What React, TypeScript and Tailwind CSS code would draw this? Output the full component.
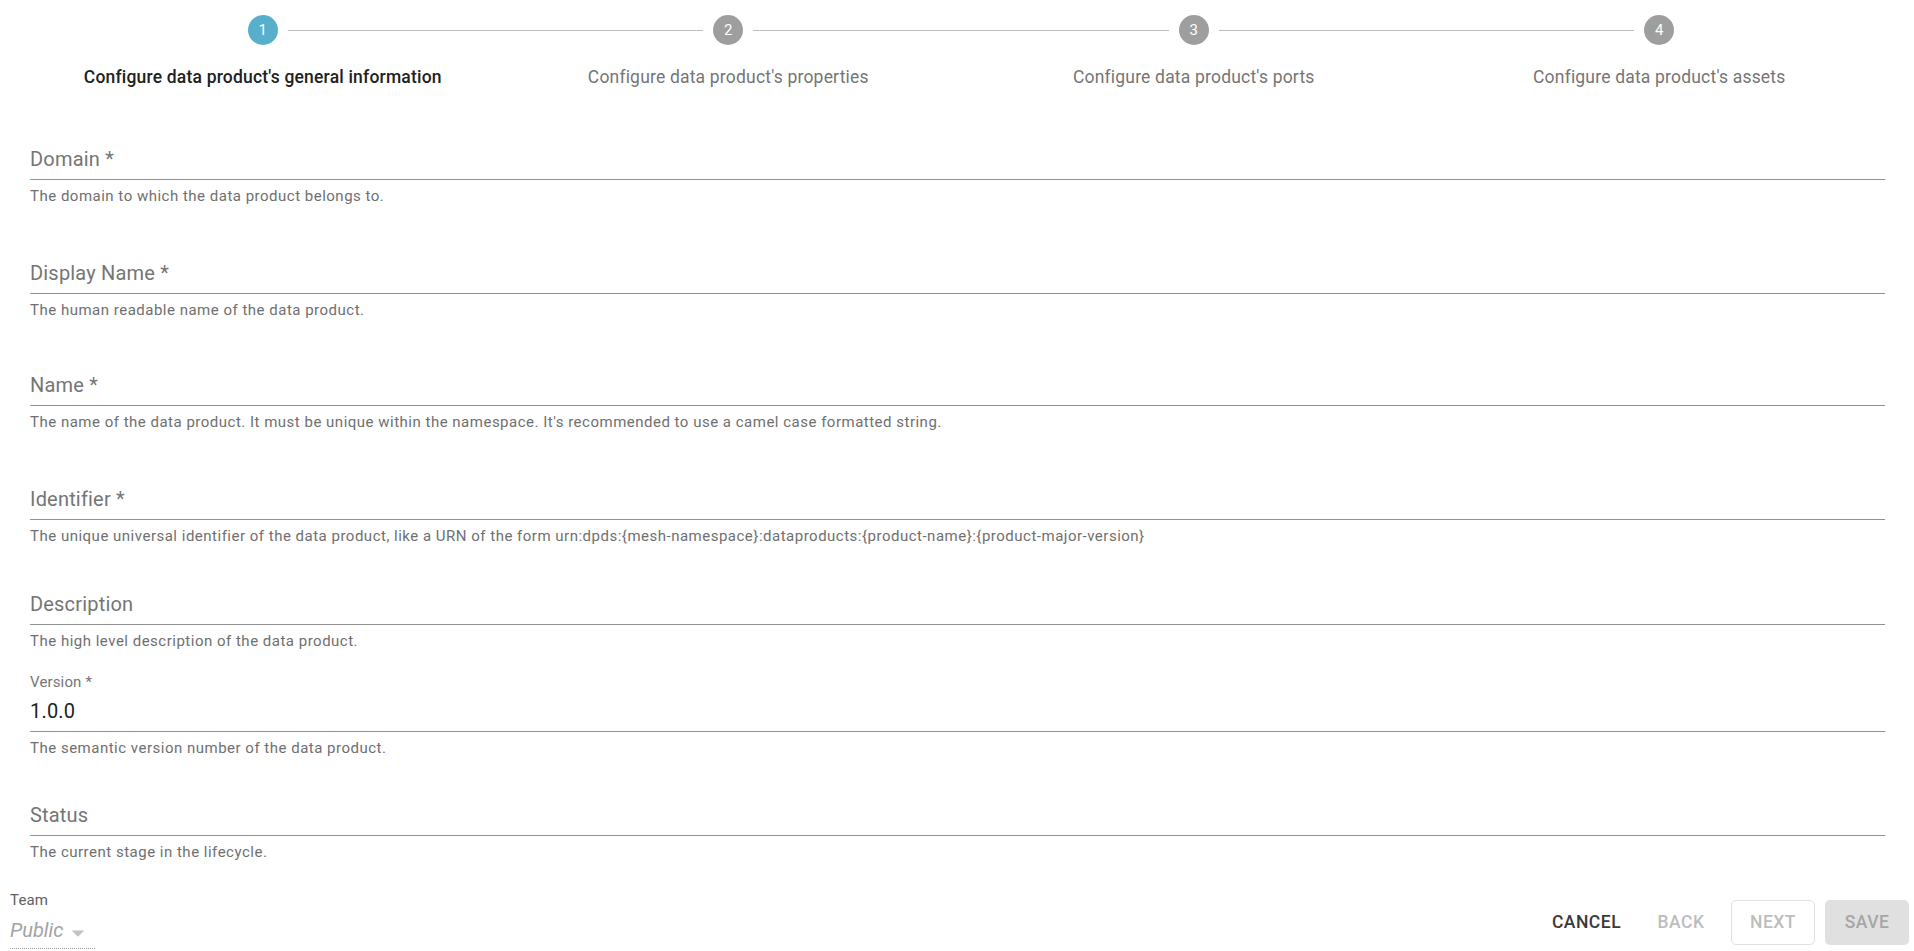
import React from 'react';

const steps = [
  "Configure data product's general information",
  "Configure data product's properties",
  "Configure data product's ports",
  "Configure data product's assets",
];

type FieldDef = { label: string; helper: string; mt: string; value?: string };

const fields: FieldDef[] = [
  { label: 'Domain *', helper: 'The domain to which the data product belongs to.', mt: 'mt-0' },
  { label: 'Display Name *', helper: 'The human readable name of the data product.', mt: 'mt-[29px]' },
  {
    label: 'Name *',
    helper:
      "The name of the data product. It must be unique within the namespace. It's recommended to use a camel case formatted string.",
    mt: 'mt-[27px]',
  },
  {
    label: 'Identifier *',
    helper:
      'The unique universal identifier of the data product, like a URN of the form urn:dpds:{mesh-namespace}:dataproducts:{product-name}:{product-major-version}',
    mt: 'mt-[29px]',
  },
  { label: 'Description', helper: 'The high level description of the data product.', mt: 'mt-[20px]' },
  { label: 'Version *', helper: 'The semantic version number of the data product.', mt: 'mt-[22px]', value: '1.0.0' },
  { label: 'Status', helper: 'The current stage in the lifecycle.', mt: 'mt-[19px]' },
];

function Stepper() {
  return (
    <div className="flex pt-[15px] pl-[30px] pr-[22px]">
      {steps.map((s, i) => {
        const active = i === 0;
        return (
          <div key={s} className="flex-1 flex flex-col items-center">
            <div className="flex items-center w-full">
              <div className={i === 0 ? 'flex-1 mr-[10px]' : 'flex-1 mr-[10px] h-px bg-[#bdbdbd]'} />
              <div
                className={
                  'w-[30px] h-[30px] rounded-full flex items-center justify-center text-white text-[15px] leading-none ' +
                  (active ? 'bg-[#58afcb]' : 'bg-[#9e9e9e]')
                }
              >
                {i + 1}
              </div>
              <div className={i === steps.length - 1 ? 'flex-1 ml-[10px]' : 'flex-1 ml-[10px] h-px bg-[#bdbdbd]'} />
            </div>
            <div
              className={
                'mt-[20px] text-[17.5px] leading-[25px] tracking-[0.19px] text-center ' +
                (active ? 'text-[#212121] font-medium' : 'text-[#757575]')
              }
            >
              {s}
            </div>
          </div>
        );
      })}
    </div>
  );
}

function Field({ f }: { f: FieldDef }) {
  return (
    <div className={f.mt}>
      {f.value ? (
        <div className="h-[56px] border-b border-[#919191] flex flex-col justify-between pb-[8px]">
          <span className="text-[15px] leading-[13px] text-[#757575] tracking-[0.15px]">{f.label}</span>
          <span className="text-[20px] leading-[24px] text-[#222] tracking-[0.19px]">{f.value}</span>
        </div>
      ) : (
        <div className="h-[56px] border-b border-[#919191] flex items-end pb-[8px]">
          <span className="text-[20px] leading-[24px] text-[#757575] tracking-[0.19px]">{f.label}</span>
        </div>
      )}
      <p className="mt-[4px] text-[15px] leading-[25px] tracking-[0.5px] text-[#6f6f6f]">{f.helper}</p>
    </div>
  );
}

export default function App() {
  return (
    <div className="font-['Roboto',sans-serif] bg-white w-full min-h-screen">
      <Stepper />

      <div className="pl-[30px] pr-[29px] pt-[34px]">
        {fields.map((f) => (
          <Field key={f.label} f={f} />
        ))}
      </div>

      <div className="mt-[28px] flex justify-between items-start pl-[10px] pr-[5px]">
        <div className="w-[85px]">
          <div className="text-[15px] leading-[15px] text-[#616161] tracking-[0.15px]">Team</div>
          <div className="mt-[10px] h-[31px] border-b border-dotted border-[#9a9a9a] flex items-start">
            <span className="text-[20px] leading-[24px] italic text-[#a3a3a3]">Public</span>
            <svg viewBox="0 0 24 24" className="w-[30px] h-[30px] shrink-0" fill="#c2c2c2">
              <path d="M7 10l5 5 5-5z" />
            </svg>
          </div>
        </div>

        <div className="mt-[7px] flex items-center gap-[10px] h-[45px]">
          <button className="w-[89px] h-[45px] rounded-[5px] text-[17.5px] font-medium uppercase tracking-[0.5px] text-[#3a3a3a]">
            Cancel
          </button>
          <button disabled className="w-[80px] h-[45px] rounded-[5px] text-[17.5px] font-medium uppercase tracking-[0.5px] text-[#bdbdbd]">
            Back
          </button>
          <button disabled className="w-[84px] h-[45px] rounded-[5px] border border-[#e0e0e0] text-[17.5px] font-medium uppercase tracking-[0.5px] text-[#bdbdbd]">
            Next
          </button>
          <button disabled className="w-[84px] h-[45px] rounded-[5px] bg-[#e0e0e0] text-[17.5px] font-medium uppercase tracking-[0.5px] text-[#a6a6a6]">
            Save
          </button>
        </div>
      </div>
    </div>
  );
}
